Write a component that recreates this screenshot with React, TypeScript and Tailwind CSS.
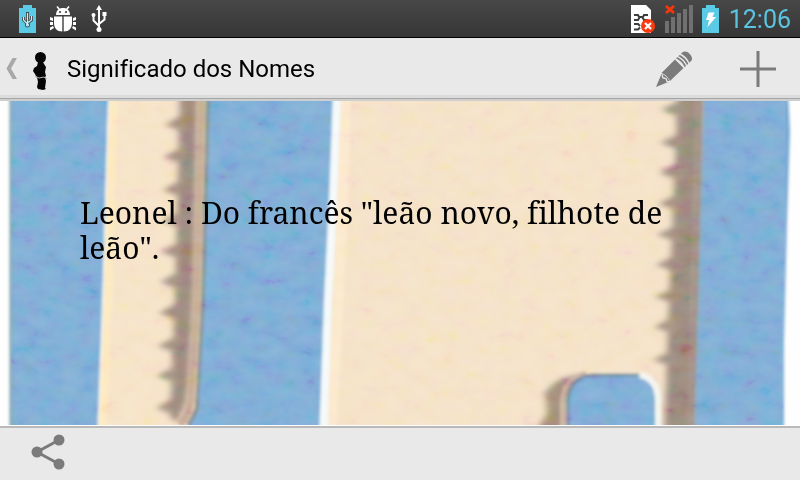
import type { ReactNode } from 'react';

const LEFT_TEETH = [24, 56, 89, 120, 151, 181, 212, 245, 275, 307];
const RIGHT_TEETH = [9, 42, 72, 103, 134, 164, 196, 226, 259];

function IconButton({ label, children }: { label: string; children: ReactNode }) {
  return (
    <button type="button" aria-label={label} className="flex h-12 w-12 items-center justify-center">
      {children}
    </button>
  );
}

function UsbMark({ className }: { className: string }) {
  return (
    <svg className={className} viewBox="0 0 16 28" fill="none" stroke="currentColor" strokeWidth="2">
      <path d="M8 4v20M2.500 10v5.500L8 21M13.500 9v5.500L8 19" />
      <path d="M8 0l3 5H5z" fill="currentColor" stroke="none" />
      <circle cx="8" cy="24.500" r="2.500" fill="currentColor" stroke="none" />
      <circle cx="2.500" cy="10" r="2" fill="currentColor" stroke="none" />
      <path d="M11.500 7h4v4h-4z" fill="currentColor" stroke="none" />
    </svg>
  );
}

function StatusBar() {
  return (
    <div className="flex h-[38px] items-center justify-between border-b border-black bg-linear-to-b from-[#484848] to-[#363636] pr-[9px] pl-[19px]">
      <div className="flex items-center text-white">
        {/* usb battery */}
        <svg className="h-7 w-[17px]" viewBox="0 0 17 28">
          <path d="M4 0h9v3h4v25H0V3h4z" fill="#5bcbe5" />
          <g fill="none" stroke="#3f4a4e" strokeWidth="3">
            <path d="M8.500 7v14M4.500 12v3l4 4M12.500 11v4l-4 3" />
            <circle cx="8.500" cy="20" r="1" />
          </g>
          <g fill="none" stroke="#c8f2fa" strokeWidth="1.200">
            <path d="M8.500 8v12M4.500 12v3l4 4M12.500 11v4l-4 3" />
            <circle cx="8.500" cy="20" r="1" />
          </g>
        </svg>
        {/* debug bug */}
        <svg className="ml-[13px] h-7 w-7" viewBox="0 0 28 28" fill="currentColor">
          <path d="M8 1.500l2.500 3M20 1.500l-2.500 3" stroke="currentColor" strokeWidth="1.600" />
          <path d="M7 10c0-4.500 3-7 7-7s7 2.500 7 7z" />
          <circle cx="11" cy="7" r="1.100" fill="#404040" />
          <circle cx="17" cy="7" r="1.100" fill="#404040" />
          <path d="M5 11.500h8.300V26.500C8 26.500 5 23 5 18zM14.700 11.500H23V18c0 5-3 8.500-8.300 8.500z" />
          <path d="M1 12l3 1v3l-3-1zM1 17h3v3H1zM1 22.500l3-1.500 1 2-4 2.500zM27 12l-3 1v3l3-1zM27 17h-3v3h3zM27 22.500l-3-1.500-1 2 4 2.500z" />
        </svg>
        <UsbMark className="ml-[14px] h-7 w-4" />
      </div>
      <div className="flex items-center">
        {/* sim card error */}
        <svg className="h-7 w-6" viewBox="0 0 24 28">
          <path d="M0 0h15l5 5v23H0z" fill="#fff" />
          <g fill="none" stroke="#3c3c3c" strokeWidth="2">
            <path d="M3 10h4l1 2h4l1-2h4M3 15h4l1.500-2.500M17 15h-4l-1.500-2.500M3 19h4l2 2M3 24.500h4l2-2" />
          </g>
          <circle cx="17" cy="21" r="7" fill="#fb3a10" />
          <path d="M14 18l6 6M20 18l-6 6" stroke="#fff" strokeWidth="2.200" />
        </svg>
        {/* signal */}
        <svg className="ml-[10px] h-7 w-7" viewBox="0 0 28 28">
          <path d="M0 16h4v12H0zM6 12h4v16H6zM12 8h4v20h-4zM18 4h4v24h-4zM24 0h4v28h-4z" fill="#707070" />
          <path d="M1 1l8 7M9 1L1 8" stroke="#f9370c" strokeWidth="2.800" />
        </svg>
        {/* charging */}
        <svg className="ml-[9px] h-7 w-[17px]" viewBox="0 0 17 28">
          <path d="M4 0h9v3h4v25H0V3h4z" fill="#5bcbe5" />
          <path d="M6.500 7.500h6L10.500 12H14L5.500 22l1.500-7H4z" fill="#fff" />
        </svg>
        <time className="ml-[10px] pt-0.5 text-[25px] leading-8 text-[#5bc4df]">12:06</time>
      </div>
    </div>
  );
}

function ActionBar() {
  return (
    <header className="flex h-[61px] items-center border-b border-[#a6a6a6] bg-[#e9e9e9] pt-0.5 pr-[18px] shadow-[inset_0_-3px_0_#dcdcdc]">
      <button type="button" aria-label="Voltar" className="flex h-12 items-center pl-[6px]">
        <svg className="h-6 w-3" viewBox="0 0 12 24" fill="#a8a8a8">
          <path d="M6.500 1H11L5 11.500 11 22H6.500L.500 11.500z" />
        </svg>
        <svg className="ml-[14px] mt-1 h-10 w-[17px]" viewBox="0 0 17 40" fill="#060606">
          <circle cx="8.500" cy="6.500" r="5.500" />
          <path d="M6 11h5l1 2 2 3-1 5 1 4-2 2H5l-2-4-2-3 1-3 3-2z" />
          <path d="M5 26h8l1 4-1 7 1 1-3 1-5-1-1-2 1-5z" />
          <path d="M3 25l4 2 5-1 3 2" fill="none" stroke="#b5b5b5" strokeWidth="1" />
        </svg>
      </button>
      <h1 className="ml-[18px] flex-1 text-2xl text-black [font-variant-ligatures:none]">Significado dos Nomes</h1>
      <IconButton label="Editar">
        <svg className="h-9 w-9" viewBox="0 0 36 36" fill="#7b7b7b">
          <path d="M0 36l5.500-13c3 .5 7 4 8 7.500z" />
          <path d="M5.500 22L19 8.500l8.500 8.500-13.500 13c-1-3-5-7-8.500-8z" />
          <path d="M20 7.500l1.300-1.300c3.500 1.300 7.500 5.300 8.700 8.800L28.700 16.300c-1.200-3.500-5.200-7.500-8.700-8.800z" />
          <path d="M22.300 5.200l1.300-1.300c3.500 1.300 7.500 5.300 8.700 8.800L31 14c-1.200-3.500-5.200-7.500-8.700-8.800z" />
          <path d="M24.800 2.800L27 1c4-2.500 11 4.500 8.500 8.500l-2.200 2.200c-1.200-3.500-5-7.700-8.500-8.900z" />
          <path d="M6 23.500l1 3.500 3 .500 1 3 3 .500" fill="none" stroke="#e9e9e9" strokeWidth="1.300" />
        </svg>
      </IconButton>
      <div className="ml-9">
        <IconButton label="Adicionar">
          <svg className="h-9 w-9" viewBox="0 0 36 36" fill="#7b7b7b">
            <path d="M16.500 0h3v16.500H36v3H19.500V36h-3V19.500H0v-3h16.500z" />
          </svg>
        </IconButton>
      </div>
    </header>
  );
}

/* painted wooden board behind the text */
function Board() {
  return (
    <svg className="absolute inset-0 h-full w-full" viewBox="0 0 800 324" preserveAspectRatio="none" aria-hidden="true">
      <defs>
        <filter id="soft" x="-5%" y="-5%" width="110%" height="110%">
          <feGaussianBlur stdDeviation="1.500" />
        </filter>
        <filter id="shade" x="-20%" y="-20%" width="140%" height="140%">
          <feGaussianBlur stdDeviation="3 2" />
        </filter>
        <filter id="grain" x="0" y="0" width="100%" height="100%">
          <feTurbulence type="fractalNoise" baseFrequency="0.050 0.070" numOctaves="3" seed="4" />
          <feColorMatrix values="1.600 0 0 0 -.3  0 1.600 0 0 -.3  0 0 1.600 0 -.3  0 0 0 0 1" />
        </filter>
      </defs>
      <rect width="800" height="324" fill="#fefefe" />
      <g filter="url(#soft)">
        <path d="M10-9H788L790 30 787 120 784 240V340H10z" fill="#7cabd5" />
        <path d="M11-9v349" stroke="#7fa4b2" strokeWidth="3" />
        {/* narrow slat */}
        <path d="M109-9H209L203 200 196 305Q190 322 178 340H98L104 200z" fill="#f6e2c6" />
        <path d="M114-9L108 200 102 340" fill="none" stroke="#fde8bc" strokeWidth="8" />
        <path d="M109-9L103 200 98 340" fill="none" stroke="#f4f2ea" strokeWidth="2" />
        <g filter="url(#shade)">
          <path d="M180-9H198L194 200 187 300 177 322 170 315 175 200z" fill="#998578" />
          {LEFT_TEETH.map((y, i) => (
            <path key={y} d={`M${186 - i} ${y - 12}L${165 - i} ${y}L${186 - i} ${y + 8}z`} fill="#a08b7c" />
          ))}
        </g>
        <path d="M202-9L197 200 191 300Q189 314 180 324" fill="none" stroke="#c4aa92" strokeWidth="7" />
        <path d="M208-9L203 200 197 305Q195 314 188 324" fill="none" stroke="#859190" strokeWidth="4" />
        {/* wide slat */}
        <path d="M334-9H704L696 200 694 340H320L328 180z" fill="#f5e1c6" />
        <path d="M346-9L343 100 337 230 331 340" fill="none" stroke="#fce8cb" strokeWidth="10" />
        <path d="M337-9L333 100 328 200 323 340" fill="none" stroke="#f4f9fa" strokeWidth="8" />
        <g filter="url(#shade)">
          <path d="M678-9H702L697 200 692 340H664L669 200z" fill="#998679" />
          {RIGHT_TEETH.map((y, i) => (
            <path key={y} d={`M${684 - i} ${y - 12}L${661 - i} ${y}L${684 - i} ${y + 8}z`} fill="#a08d7d" />
          ))}
        </g>
        <path d="M699-9L694 200 690 340" fill="none" stroke="#a08e82" strokeWidth="8" />
        <path d="M706-9L700 200 696 340" fill="none" stroke="#80abc9" strokeWidth="4" />
        {/* peg */}
        <path d="M534 334L547 312 545 292Q556 276 578 274L566 300V334z" fill="#a18b78" filter="url(#shade)" />
        <path d="M562 340V300Q564 276 586 272" fill="none" stroke="#c9b49d" strokeWidth="4" />
        <path d="M568 340V300Q570 274 592 273H636Q658 275 660 300V340z" fill="#7cabd5" />
        <path d="M568 340V300Q570 276 592 274H638" fill="none" stroke="#728b98" strokeWidth="3" />
        <path d="M590 271H636" stroke="#f4e4ca" strokeWidth="2" />
        <path d="M640 274Q658 278 658 300V340" fill="none" stroke="#f2f5ee" strokeWidth="6" />
      </g>
      <rect width="774" x="11" height="324" filter="url(#grain)" opacity="0.300" className="mix-blend-soft-light" />
    </svg>
  );
}

export default function App() {
  return (
    <div className="flex min-h-screen flex-col bg-white font-['Roboto',sans-serif]">
      <StatusBar />
      <ActionBar />
      <main className="relative flex-1 overflow-hidden border-t-2 border-[#cfcfcf]">
        <Board />
        <p className="relative px-20 pt-[94px] font-['Droid_Serif','Noto_Serif','Liberation_Serif',serif] text-[30px] leading-[35px] text-black [font-variant-ligatures:none]">
          Leonel : Do francês "leão novo, filhote de leão".
        </p>
      </main>
      <footer className="mt-px flex h-[54px] items-center border-t-2 border-[#b9b9b9] bg-[#e9e9e9] pb-1 pl-6">
        <IconButton label="Compartilhar">
          <svg className="h-9 w-9" viewBox="0 0 36 36" fill="#7b7b7b">
            <path d="M29 6L7 18l22 12" fill="none" stroke="#7b7b7b" strokeWidth="3" />
            <circle cx="7" cy="18" r="5.500" />
            <circle cx="29" cy="6" r="5.500" />
            <circle cx="29" cy="30" r="5.500" />
          </svg>
        </IconButton>
      </footer>
    </div>
  );
}
